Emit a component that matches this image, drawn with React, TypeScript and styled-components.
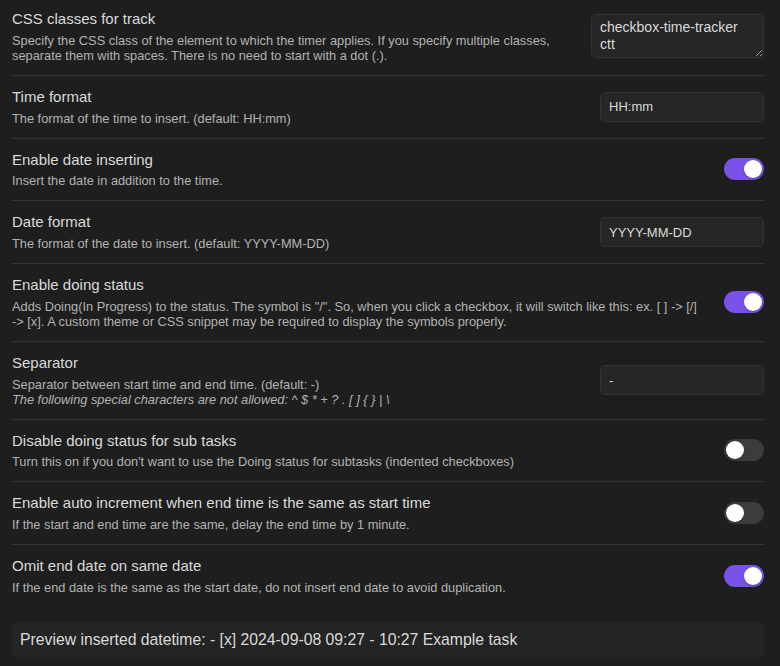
import React from "react";
import styled, { createGlobalStyle } from "styled-components";

const Global = createGlobalStyle`
  html, body {
    margin: 0;
    padding: 0;
    background: #1e1e1e;
  }
  body {
    font-family: "Liberation Sans", Arial, sans-serif;
    color: #dadada;
    overflow: hidden;
  }
  * { box-sizing: border-box; }
`;

const Page = styled.div`
  height: 666px;
  padding: 0 16px 0 12px;
  background: #1e1e1e;
  display: flex;
  flex-direction: column;
`;

const Row = styled.div`
  display: flex;
  align-items: center;
  padding: 12px 0;
  border-top: 1px solid #333333;
  &:first-child {
    border-top: none;
    padding-top: 10px;
  }
`;

const Info = styled.div`
  flex: 1 1 auto;
  min-width: 0;
  margin-right: 16px;
`;

const Name = styled.div`
  font-size: 15px;
  line-height: 18.75px;
  color: #dadada;
`;

const Desc = styled.div`
  font-size: 12.8px;
  line-height: 15px;
  padding-top: 4px;
  color: #b3b3b3;
`;

const Italic = styled.em`
  display: block;
  font-style: italic;
`;

const NoWrap = styled.span`
  white-space: nowrap;
`;

const Control = styled.div`
  flex: 0 0 auto;
  display: flex;
  align-items: center;
  justify-content: flex-end;
`;

const TextInput = styled.input`
  width: 164px;
  height: 30px;
  padding: 0 8px;
  background: #262626;
  border: 1px solid #333333;
  border-radius: 5px;
  color: #dadada;
  font-family: "Liberation Sans", Arial, sans-serif;
  font-size: 13px;
  outline: none;
`;

const TextArea = styled.textarea`
  width: 173px;
  height: 44px;
  padding: 4px 8px;
  background: #262626;
  border: 1px solid #333333;
  border-radius: 5px;
  color: #dadada;
  font-family: "Liberation Sans", Arial, sans-serif;
  font-size: 14px;
  line-height: 17px;
  outline: none;
  resize: both;
  overflow: hidden;
  display: block;
`;

const Toggle = styled.div<{ $on: boolean }>`
  width: 40px;
  height: 22px;
  border-radius: 11px;
  padding: 2px;
  background: ${(p) => (p.$on ? "#7a52e9" : "#3c3c3c")};
  display: flex;
  justify-content: ${(p) => (p.$on ? "flex-end" : "flex-start")};
  &::after {
    content: "";
    width: 18px;
    height: 18px;
    border-radius: 50%;
    background: #ffffff;
    box-shadow: 0 1px 2px rgba(0, 0, 0, 0.25);
  }
`;

const Preview = styled.div`
  margin-top: 15px;
  padding: 8px 8px;
  background: #242424;
  border-radius: 5px;
  font-size: 15.75px;
  line-height: 19px;
  color: #dadada;
`;

type Setting = {
  name: string;
  desc: React.ReactNode;
  control: React.ReactNode;
};

const settings: Setting[] = [
  {
    name: "CSS classes for track",
    desc:
      "Specify the CSS class of the element to which the timer applies. If you specify multiple classes, separate them with spaces. There is no need to start with a dot (.).",
    control: <TextArea defaultValue={"checkbox-time-tracker\nctt"} />,
  },
  {
    name: "Time format",
    desc: "The format of the time to insert. (default: HH:mm)",
    control: <TextInput defaultValue="HH:mm" />,
  },
  {
    name: "Enable date inserting",
    desc: "Insert the date in addition to the time.",
    control: <Toggle $on={true} />,
  },
  {
    name: "Date format",
    desc: "The format of the date to insert. (default: YYYY-MM-DD)",
    control: <TextInput defaultValue="YYYY-MM-DD" />,
  },
  {
    name: "Enable doing status",
    desc: (
      <>
        Adds Doing(In Progress) to the status. The symbol is "/". So, when you click a checkbox, it
        will switch like this: ex. [ ] <NoWrap>-&gt;</NoWrap> [/] <NoWrap>-&gt;</NoWrap> [x]. A
        custom theme or CSS snippet may be required to display the symbols properly.
      </>
    ),
    control: <Toggle $on={true} />,
  },
  {
    name: "Separator",
    desc: (
      <>
        Separator between start time and end time. (default: -)
        <Italic>
          The following special characters are not allowed: ^ $ * + ? . [ ] {"{"} {"}"} | \
        </Italic>
      </>
    ),
    control: <TextInput defaultValue="-" />,
  },
  {
    name: "Disable doing status for sub tasks",
    desc:
      "Turn this on if you don't want to use the Doing status for subtasks (indented checkboxes)",
    control: <Toggle $on={false} />,
  },
  {
    name: "Enable auto increment when end time is the same as start time",
    desc: "If the start and end time are the same, delay the end time by 1 minute.",
    control: <Toggle $on={false} />,
  },
  {
    name: "Omit end date on same date",
    desc:
      "If the end date is the same as the start date, do not insert end date to avoid duplication.",
    control: <Toggle $on={true} />,
  },
];

export default function App() {
  return (
    <>
      <Global />
      <Page>
        <div>
          {settings.map((s) => (
            <Row key={s.name}>
              <Info>
                <Name>{s.name}</Name>
                <Desc>{s.desc}</Desc>
              </Info>
              <Control>{s.control}</Control>
            </Row>
          ))}
        </div>
        <Preview>
          Preview inserted datetime: - [x] 2024-09-08 09:27 - 10:27 Example task
        </Preview>
      </Page>
    </>
  );
}
